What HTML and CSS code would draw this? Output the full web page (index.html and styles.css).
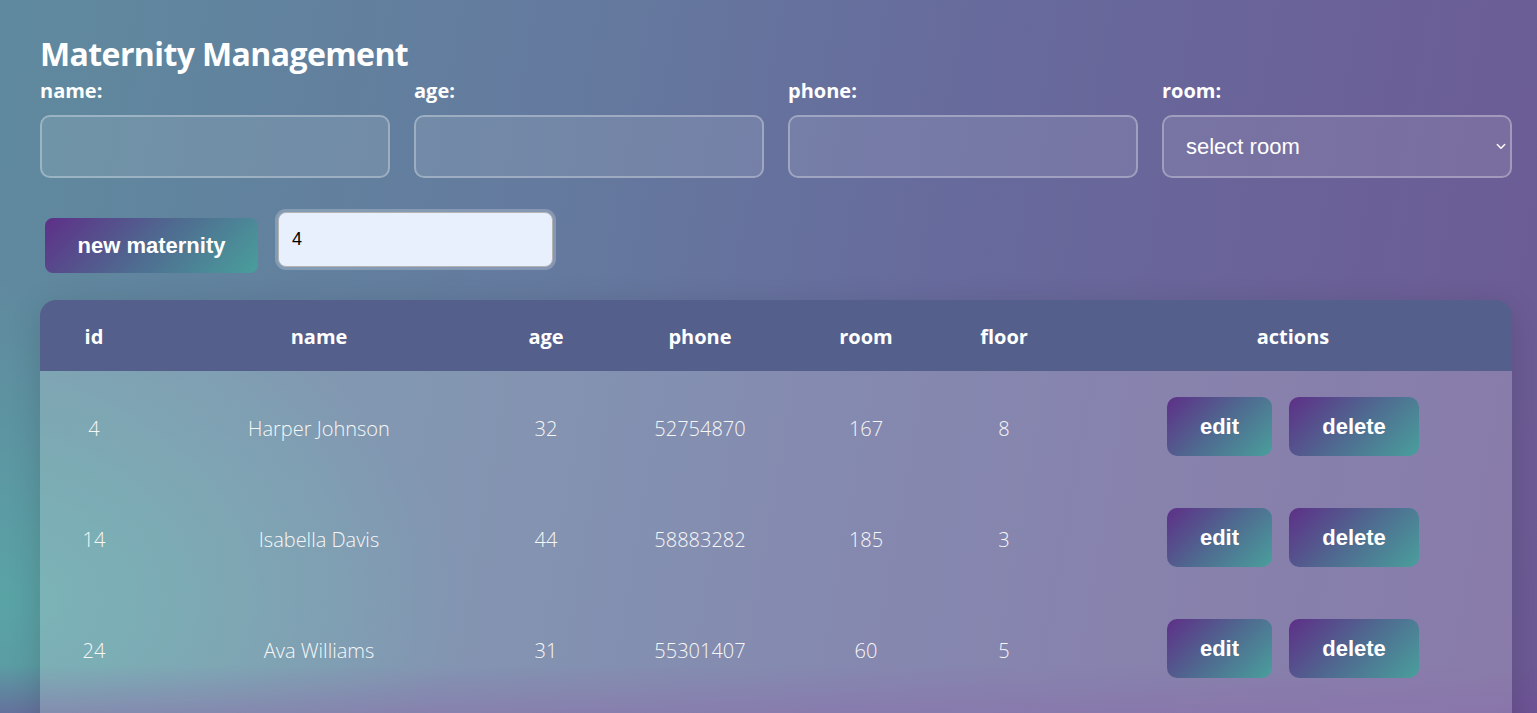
FILE: index.html
```html
<!DOCTYPE html>
<html lang="en">
<head>
<meta charset="utf-8">
<title>Maternity Management</title>
<link rel="stylesheet" href="styles.css">
</head>
<body>
<div class="page">
  <h1 class="title">Maternity Management</h1>
  <div class="form-grid">
    <div class="field">
      <label class="field-label">name:</label>
      <input class="field-input" type="text">
    </div>
    <div class="field">
      <label class="field-label">age:</label>
      <input class="field-input" type="text">
    </div>
    <div class="field">
      <label class="field-label">phone:</label>
      <input class="field-input" type="text">
    </div>
    <div class="field">
      <label class="field-label">room:</label>
      <div class="select-wrap">
        <div class="field-select">select room</div>
        <svg class="chev" width="10" height="7" viewBox="0 0 10 7"><path d="M1.3 1.5 L5 5.2 L8.7 1.5" fill="none" stroke="#fff" stroke-width="1.5" stroke-linecap="round" stroke-linejoin="round"/></svg>
      </div>
    </div>
  </div>
  <div class="toolbar">
    <button class="grad-btn new-btn">new maternity</button>
    <input class="search" type="text" value="4">
  </div>
  <table class="grid">
    <colgroup>
      <col class="c-id"><col class="c-name"><col class="c-age"><col class="c-phone"><col class="c-room"><col class="c-floor"><col class="c-actions">
    </colgroup>
    <thead>
      <tr><th>id</th><th>name</th><th>age</th><th>phone</th><th>room</th><th>floor</th><th>actions</th></tr>
    </thead>
    <tbody>
      <tr><td>4</td><td>Harper Johnson</td><td>32</td><td>52754870</td><td>167</td><td>8</td><td class="actions"><button class="grad-btn act-btn edit">edit</button><button class="grad-btn act-btn del">delete</button></td></tr>
      <tr><td>14</td><td>Isabella Davis</td><td>44</td><td>58883282</td><td>185</td><td>3</td><td class="actions"><button class="grad-btn act-btn edit">edit</button><button class="grad-btn act-btn del">delete</button></td></tr>
      <tr><td>24</td><td>Ava Williams</td><td>31</td><td>55301407</td><td>60</td><td>5</td><td class="actions"><button class="grad-btn act-btn edit">edit</button><button class="grad-btn act-btn del">delete</button></td></tr>
      <tr class="filler"><td colspan="7"></td></tr>
    </tbody>
  </table>
</div>
</body>
</html>
```
FILE: styles.css
```css
html, body {
  margin: 0;
  padding: 0;
}
body {
  min-height: 100vh;
  font-family: "Open Sans", "Noto Sans", sans-serif;
  color: #fff;
  background:
    linear-gradient(to bottom, rgba(110,75,150,0) 665px, rgba(110,75,150,0.5) 713px),
    radial-gradient(ellipse 460px 320px at 0px 600px, rgba(88,168,166,0.85), rgba(88,168,166,0) 100%),
    linear-gradient(100deg, #5f8a9e 0%, #647a9e 35%, #676a9c 60%, #6c5a94 100%);
  background-attachment: fixed;
  overflow: hidden;
}
.page {
  padding: 30px 25px 0 40px;
  width: 1472px;
}
.title {
  margin: 0;
  font-size: 32px;
  letter-spacing: -0.6px;
  font-weight: 700;
  line-height: 48px;
}
.form-grid {
  display: grid;
  grid-template-columns: repeat(4, 350px);
  column-gap: 24px;
}
.field {
  display: flex;
  flex-direction: column;
}
.field-label {
  font-size: 20px;
  font-weight: 700;
  line-height: 24px;
  margin-top: 1px;
  margin-bottom: 12px;
}
.field-input, .field-select {
  box-sizing: border-box;
  height: 63px;
  width: 350px;
  border: 2px solid rgba(255,255,255,0.3);
  border-radius: 10px;
  background: rgba(255,255,255,0.1);
  color: #fff;
  font-family: "Liberation Sans", Arial, sans-serif;
  font-size: 22px;
  padding: 0 22px;
  outline: none;
}
.select-wrap {
  position: relative;
}
.field-select {
  display: flex;
  align-items: center;
}
.chev {
  position: absolute;
  right: 6px;
  top: 28px;
}
.toolbar {
  display: flex;
  align-items: flex-start;
  margin-top: 34px;
}
.grad-btn {
  border: none;
  color: #fff;
  font-family: "Liberation Sans", Arial, sans-serif;
  font-weight: 700;
  background: linear-gradient(135deg, #5e2f88 0%, #4f6a90 50%, #499f9c 100%);
  cursor: pointer;
}
.new-btn {
  margin: 6px 0 0 5px;
  width: 213px;
  height: 55px;
  border-radius: 8px;
  font-size: 22px;
}
.search {
  box-sizing: border-box;
  margin-left: 20px;
  width: 275px;
  height: 55px;
  border: 1px solid #b3b3b3;
  border-radius: 8px;
  background: #e8f0fe;
  box-shadow: 0 0 0 3px rgba(255,255,255,0.22);
  font-family: "Liberation Sans", Arial, sans-serif;
  font-size: 18px;
  color: #000;
  padding: 0 13px;
  outline: none;
}
.grid {
  margin-top: 27px;
  width: 1472px;
  border-collapse: separate;
  border-spacing: 0;
  table-layout: fixed;
  border-radius: 16px 16px 0 0;
  overflow: hidden;
  box-shadow: 0 8px 32px rgba(0,0,0,0.14);
}
.c-id { width: 108px; }
.c-name { width: 342px; }
.c-age { width: 112px; }
.c-phone { width: 196px; }
.c-room { width: 136px; }
.c-floor { width: 140px; }
.c-actions { width: 438px; }
.grid th {
  background: #545f8c;
  height: 71px;
  padding: 2px 0 0;
  box-sizing: border-box;
  font-size: 20px;
  font-weight: 700;
  text-align: center;
}
.grid td {
  background: rgba(255,255,255,0.2);
  height: 111px;
  padding: 3px 0 0;
  box-sizing: border-box;
  font-size: 20px;
  font-weight: 300;
  text-align: center;
  color: #f7f7f7;
}
.grid td.actions {
  padding: 0;
  white-space: nowrap;
}
.act-btn {
  height: 59px;
  border-radius: 10px;
  font-size: 22px;
  vertical-align: middle;
}
.edit { width: 105px; }
.del { width: 130px; margin-left: 17px; }
```
